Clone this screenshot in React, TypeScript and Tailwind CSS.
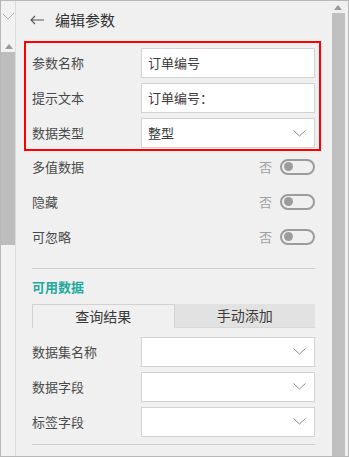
import React from "react";

const font = { fontFamily: '"Noto Sans CJK SC", "Noto Sans", sans-serif' };

function Chevron() {
  return (
    <svg width="13" height="7" viewBox="0 0 13 7" className="shrink-0">
      <polyline points="0.5,0.5 6.5,6 12.5,0.5" fill="none" stroke="#8a8a8a" strokeWidth="1" />
    </svg>
  );
}

function Toggle() {
  return (
    <div className="flex items-center gap-[8px]">
      <span className="text-[13px] text-[#a0a0a0]">否</span>
      <div className="flex h-[16px] w-[35px] items-center rounded-full border-2 border-[#9c9c9c] pl-[2px]">
        <div className="h-[9px] w-[9px] rounded-full bg-[#9c9c9c]" />
      </div>
    </div>
  );
}

function Field({ label, value, select }: { label: string; value?: string; select?: boolean }) {
  return (
    <div className="flex h-[30px] items-center">
      <span className="w-[109px] text-[13px] text-[#4a4a4a]">{label}</span>
      <div className="flex h-[30px] flex-1 items-center justify-between border border-[#d2d2d2] bg-white pl-[6px] pr-[8px] text-[13px] text-[#3a3a3a]">
        <span>{value}</span>
        {select ? <Chevron /> : null}
      </div>
    </div>
  );
}

export default function App() {
  return (
    <div
      className="flex h-[457px] w-[349px] overflow-hidden border border-[#b8b8b8] bg-[#f0f0f0]"
      style={font}
    >
      {/* left strip */}
      <div className="flex w-[15px] shrink-0 flex-col border-r border-[#dcdcdc] bg-[#f2f2f2]">
        <div className="h-[51px]">
          <svg width="13" height="8" viewBox="0 0 13 8" className="ml-[1px] mt-[12px]">
            <polyline points="1,1 6,6 12,0" fill="none" stroke="#aaa" strokeWidth="1" />
          </svg>
          <div className="ml-[4px] mt-[23px] h-0 w-0 border-x-[4px] border-b-[5px] border-x-transparent border-b-[#9a9a9a]" />
        </div>
        <div className="h-[193px] bg-[#bdbdbd]" />
      </div>

      {/* main */}
      <div className="flex flex-1 flex-col">
        <div className="flex h-[40px] items-center pb-[2px] pl-[14px]">
          <svg width="14" height="10" viewBox="0 0 14 10">
            <path d="M5 1 L1 5 L5 9 M1 5 H14" fill="none" stroke="#555" strokeWidth="1.1" />
          </svg>
          <span className="ml-[11px] text-[15px] text-[#333]">编辑参数</span>
        </div>

        <div className="mx-[8px] mr-[10px] flex flex-col gap-[5px] border-2 border-[#ff0000] pb-[1px] pl-[6px] pr-[4px] pt-[5px]">
          <Field label="参数名称" value="订单编号" />
          <Field label="提示文本" value="订单编号：" />
          <Field label="数据类型" value="整型" select />
        </div>

        <div className="-mt-[2px] flex flex-col px-[16px]">
          {["多值数据", "隐藏", "可忽略"].map((t) => (
            <div key={t} className="flex h-[35px] items-center justify-between">
              <span className="text-[13px] text-[#4a4a4a]">{t}</span>
              <Toggle />
            </div>
          ))}
          <div className="mt-[14px] border-t border-[#d0d0d0]" />
          <div className="mt-[8px] text-[13px] font-bold text-[#1fa99c]">可用数据</div>
          <div className="mt-[7px] flex h-[24px]">
            <div className="flex flex-1 items-center justify-center border-x border-t border-[#d2d2d2] text-[14px] text-[#3a3a3a]">
              查询结果
            </div>
            <div className="flex flex-1 items-center justify-center border-b border-[#d8d8d8] bg-[#e2e2e2] text-[14px] text-[#3a3a3a]">
              手动添加
            </div>
          </div>
          <div className="mt-[9px] flex flex-col gap-[5px]">
            <Field label="数据集名称" select />
            <Field label="数据字段" select />
            <Field label="标签字段" select />
          </div>
          <div className="mt-[7px] border-t border-[#d0d0d0]" />
        </div>
      </div>

      {/* right scrollbar */}
      <div className="flex w-[17px] shrink-0 flex-col pr-[3px]">
        <div className="h-[12px] pt-[4px]">
          <div className="ml-[3px] h-0 w-0 border-x-[4px] border-b-[5px] border-x-transparent border-b-[#9a9a9a]" />
        </div>
        <div className="ml-[1px] flex-1 bg-[#c0c0c0]" />
      </div>
    </div>
  );
}
